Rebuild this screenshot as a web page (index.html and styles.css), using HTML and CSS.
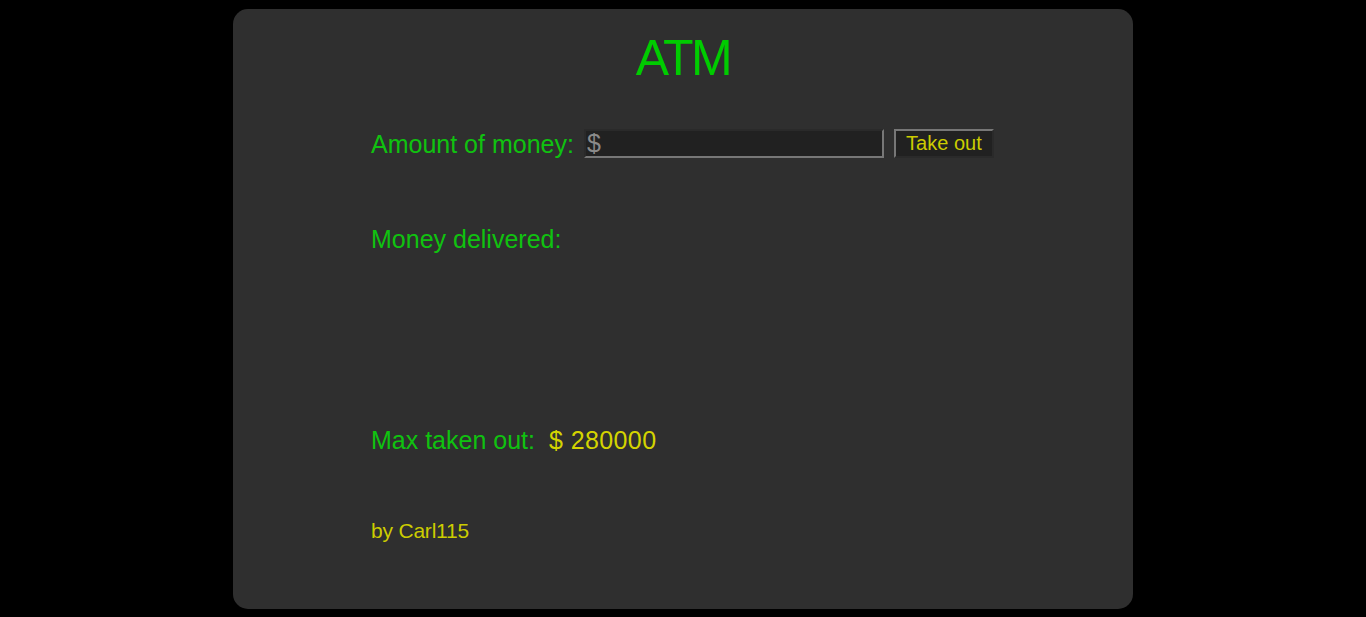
FILE: index.html
```html
<!DOCTYPE html>
<html lang="en">
<head>
<meta charset="utf-8">
<title>ATM</title>
<link rel="stylesheet" href="styles.css">
</head>
<body>
<main class="card">
  <h1 class="title">ATM</h1>
  <div class="content">
    <div class="row">
      <label class="label" for="amount">Amount of money:</label>
      <input class="input" id="amount" type="text" placeholder="$">
      <button class="btn" type="button">Take out</button>
    </div>
    <p class="label delivered">Money delivered:</p>
    <div class="max">
      <span class="label">Max taken out:</span>
      <span class="value">$ 280000</span>
    </div>
    <p class="by">by Carl115</p>
  </div>
</main>
</body>
</html>
```

FILE: styles.css
```css
html, body {
  margin: 0;
  padding: 0;
  background: #000;
}

body {
  font-family: "Liberation Sans", Arial, sans-serif;
  padding-top: 9px;
}

.card {
  width: 900px;
  height: 600px;
  margin: 0 auto;
  box-sizing: border-box;
  background: #2f2f2f;
  border-radius: 15px;
  padding-top: 21px;
}

.title {
  margin: 0;
  text-align: center;
  font-weight: normal;
  font-size: 50px;
  line-height: 56px;
  letter-spacing: -2.5px;
  color: #00cc00;
}

.content {
  width: 624px;
  margin: 43px auto 0;
}

.row {
  display: flex;
  align-items: center;
  gap: 10px;
  height: 29px;
}

.label {
  color: #10c210;
  font-size: 25px;
  line-height: 30px;
}

.input {
  box-sizing: border-box;
  width: 300px;
  height: 29px;
  margin: 0;
  padding: 0 0 0 1px;
  background: #212121;
  border: 2px solid;
  border-color: #2a2a2a #777 #777 #2a2a2a;
  font-family: "Liberation Sans", Arial, sans-serif;
  font-size: 25px;
  color: #ccc;
  outline: none;
}

.input::placeholder {
  color: #8a8a8a;
}

.btn {
  box-sizing: border-box;
  width: 100px;
  height: 29px;
  margin: 0;
  padding: 0;
  background: #212121;
  border: 2px solid;
  border-color: #777 #2a2a2a #2a2a2a #777;
  font-family: "Liberation Sans", Arial, sans-serif;
  font-size: 20px;
  color: #cccc00;
}

.delivered {
  margin: 66px 0 0;
}

.max {
  display: flex;
  gap: 14px;
  margin-top: 171px;
  height: 30px;
}

.value {
  color: #d4d400;
  font-size: 25px;
  line-height: 30px;
  letter-spacing: 0.4px;
}

.by {
  margin: 63px 0 0;
  color: #cccc00;
  font-size: 21px;
  line-height: 26px;
  letter-spacing: -0.2px;
}
```
